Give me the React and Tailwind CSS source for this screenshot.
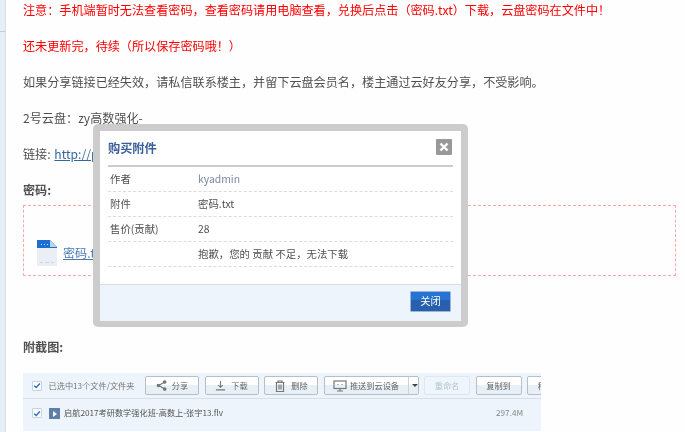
import React from "react";

const font = { fontFamily: '"Noto Sans CJK SC", "Liberation Sans", sans-serif' };

const line1 = "\u6CE8\u610F\uFF1A\u624B\u673A\u7AEF\u6682\u65F6\u65E0\u6CD5\u67E5\u770B\u5BC6\u7801\uFF0C\u67E5\u770B\u5BC6\u7801\u8BF7\u7528\u7535\u8111\u67E5\u770B\uFF0C\u5151\u6362\u540E\u70B9\u51FB\uFF08\u5BC6\u7801.txt\uFF09\u4E0B\u8F7D\uFF0C\u4E91\u76D8\u5BC6\u7801\u5728\u6587\u4EF6\u4E2D\uFF01";
const line2 = "\u8FD8\u672A\u66F4\u65B0\u5B8C\uFF0C\u5F85\u7EED\uFF08\u6240\u4EE5\u4FDD\u5B58\u5BC6\u7801\u54E6\uFF01\uFF09";
const line3 = "\u5982\u679C\u5206\u4EAB\u94FE\u63A5\u5DF2\u7ECF\u5931\u6548\uFF0C\u8BF7\u79C1\u4FE1\u8054\u7CFB\u697C\u4E3B\uFF0C\u5E76\u7559\u4E0B\u4E91\u76D8\u4F1A\u5458\u540D\uFF0C\u697C\u4E3B\u901A\u8FC7\u4E91\u597D\u53CB\u5206\u4EAB\uFF0C\u4E0D\u53D7\u5F71\u54CD\u3002";
const line4 = "2\u53F7\u4E91\u76D8\uFF1Azy\u9AD8\u6570\u5F3A\u5316-";
const sorry = "\u62B1\u6B49\uFF0C\u60A8\u7684 \u8D21\u732E \u4E0D\u8DB3\uFF0C\u65E0\u6CD5\u4E0B\u8F7D";

function Check() {
  return (
    <span className="flex h-[10px] w-[10px] shrink-0 items-center justify-center rounded-[1px] border border-[#c9d3dd] bg-white">
      <svg viewBox="0 0 10 10" className="h-[9px] w-[9px]" fill="none" stroke="#2a6fc4" strokeWidth="1.8">
        <path d="M1.5 5.2 4 7.6 8.6 2.4" />
      </svg>
    </span>
  );
}

function Tool({ w, icon, label, disabled }) {
  return (
    <div
      className={`flex h-[19px] shrink-0 items-center justify-center gap-[5px] rounded-[2px] border text-[8.2px] ${
        disabled ? "border-[#dfe7ee] bg-[#eef5fb] text-[#b4c4d2]" : "border-[#b9bec3] bg-gradient-to-b from-white from-50% to-[#e8f0f7] to-50% text-[#666]"
      } ${w}`}
    >
      {icon}
      <span>{label}</span>
    </div>
  );
}

const iconProps = { fill: "none", stroke: "#777", strokeWidth: 1.2 };

function Row({ label, value, valueClass = "text-[#505050]" }) {
  return (
    <div className="flex h-[25px] items-center border-b border-dashed border-[#dcdcdc]">
      <span className="w-[90px] pl-[2px] text-[#505050]">{label}</span>
      <span className={valueClass}>{value}</span>
    </div>
  );
}

export default function App() {
  return (
    <div style={font} className="relative flex h-[432px] w-[685px] overflow-hidden bg-[#fefefe] blur-[0.3px]">
      <div className="relative h-full w-[6px] shrink-0 border-r border-[#d5dfe9] bg-[#e6eef6]">
        <div className="absolute top-[31px] left-0 h-px w-[5px] bg-[#c4ccd4]" />
      </div>

      <main className="min-w-0 flex-1 pl-[17px] text-[12.12px] leading-[36px] text-[#505050]">
        <p className="-mt-[8px] whitespace-nowrap text-[#ff0000]">{line1}</p>
        <p className="whitespace-nowrap text-[#ff0000]">{line2}</p>
        <p className="whitespace-nowrap">{line3}</p>
        <p>{line4}</p>
        <p>
          链接: <a className="ml-px text-[#33699f] underline">http://pan.baidu.com</a>
        </p>
        <p className="font-bold">密码:</p>

        <div className="-mt-[3px] flex h-[71px] w-[653px] items-center gap-[6px] border border-dashed border-[#ffa6a6] pt-[24px] pl-[13px]">
          <svg viewBox="0 0 20 26" className="h-[26px] w-[20px] shrink-0">
            <path d="M0 0h13l7 7v19H0z" fill="#e9eff5" />
            <path d="M0 0h13l7 7v1H0z" fill="#1f6fd0" />
            <path d="M13 0l7 7h-7z" fill="#bcd2ea" />
            <path d="M4 4h1v1H4zM7 4h1v1H7zM10 4h1v1h-1z" fill="#cfe0f5" />
            <path d="M3 22h3v1H3zM8 22h4v1H8zM14 22h3v1h-3z" fill="#cdd6df" />
          </svg>
          <a className="text-[#4a7bb0] underline">密码.txt</a>
        </div>

        <p className="mt-[53px] font-bold">附截图:</p>

        <div className="mt-[8px] h-[58px] w-[518px] overflow-hidden bg-[#edf4fb]">
          <div className="flex h-[26px] items-center gap-[5.5px] border-b border-[#d8dfe6] pl-[9px] leading-none">
            <Check />
            <span className="mr-[5px] ml-[1px] w-[86px] shrink-0 whitespace-nowrap text-[8.2px] text-[#777]">已选中13个文件/文件夹</span>
            <Tool
              w="w-[54px]"
              label="分享"
              icon={
                <svg viewBox="0 0 12 12" className="h-[11px] w-[11px]" {...iconProps}>
                  <path d="M9 2.5 3 6l6 3.5" />
                  <circle cx="9.5" cy="2.2" r="1.4" fill="#777" />
                  <circle cx="2.6" cy="6" r="1.4" fill="#777" />
                  <circle cx="9.5" cy="9.8" r="1.4" fill="#777" />
                </svg>
              }
            />
            <Tool
              w="w-[54px]"
              label="下载"
              icon={
                <svg viewBox="0 0 12 12" className="h-[11px] w-[11px]" {...iconProps}>
                  <path d="M6 1v7M3.5 5.5 6 8l2.5-2.5M1 10.8h10" />
                </svg>
              }
            />
            <Tool
              w="w-[54px]"
              label="删除"
              icon={
                <svg viewBox="0 0 12 12" className="h-[12px] w-[12px]" {...iconProps}>
                  <path d="M1.5 2.5h9M4 2.5V1h4v1.5M2.5 2.5v9h7v-9M5 4.5v5M7 4.5v5" />
                </svg>
              }
            />
            <div className="flex h-[19px] w-[95px] shrink-0 items-center rounded-[2px] border border-[#b9bec3] bg-gradient-to-b from-white from-50% to-[#e8f0f7] to-50% text-[8.2px] text-[#666]">
              <span className="flex w-[84px] items-center justify-center gap-[3px] self-stretch border-r border-[#cfd4d9]">
                <svg viewBox="0 0 14 12" className="h-[12px] w-[14px]" {...iconProps}>
                  <rect x="1" y="1" width="12" height="7.5" />
                  <path d="M4 11h6M7 8.5V11" />
                  <path d="M4.5 4.5h1M8.5 4.5h1" />
                </svg>
                <span>推送到云设备</span>
              </span>
              <span className="ml-[3px] h-0 w-0 border-x-[3px] border-t-[3px] border-x-transparent border-t-[#444]" />
            </div>
            <Tool w="w-[46px]" label="重命名" disabled />
            <Tool w="w-[46px]" label="复制到" />
            <Tool w="w-[46px]" label="移动到" />
          </div>
          <div className="flex h-[32px] items-start pt-[9px] pl-[9px] leading-none">
            <Check />
            <span className="mr-[4px] ml-[7px] flex h-[11px] w-[11px] shrink-0 items-center justify-center bg-[#5f7fa6]">
              <span className="h-0 w-0 border-y-[3px] border-l-[4px] border-y-transparent border-l-white" />
            </span>
            <span className="w-[426px] shrink-0 whitespace-nowrap text-[8.2px] text-[#555]">启航2017考研数学强化班-高数上-张宇13.flv</span>
            <span className="ml-[6px] text-[8.2px] text-[#888]">297.4M</span>
          </div>
        </div>
      </main>

      <div className="absolute top-[124px] left-[93px] h-[203px] w-[375px] rounded-[5px] border-[7px] border-[#cccccc] bg-white text-[10.4px]">
        <div className="mx-[8px] flex h-[36px] items-start justify-between border-b-[2px] border-[#cccccc] pt-[8px]">
          <span className="text-[12.2px] leading-[18px] font-bold text-[#3a5f9a]">购买附件</span>
          <span className="mr-px flex h-[16px] w-[16px] items-center justify-center rounded-[1px] bg-[#999999]">
            <svg viewBox="0 0 10 10" className="h-[10px] w-[10px]" stroke="white" strokeWidth="2.4">
              <path d="M1.5 1.5l7 7M8.5 1.5l-7 7" />
            </svg>
          </span>
        </div>
        <div className="mx-[8px]">
          <Row label="作者" value="kyadmin" valueClass="text-[#7a8aa5]" />
          <Row label="附件" value="密码.txt" />
          <Row label="售价(贡献)" value="28" />
          <Row label="" value={sorry} />
        </div>
        <div className="mt-[17px] flex h-[37px] items-start justify-end border-t border-[#dddddd] bg-[#edf4fb] pt-[6px] pr-[10px]">
          <button className="h-[21px] w-[41px] rounded-[1px] border border-[#9db6d6] bg-gradient-to-b from-[#2673d2] from-40% to-[#2860ae] to-40% text-[10.2px] leading-none text-white">
            关闭
          </button>
        </div>
      </div>
    </div>
  );
}
